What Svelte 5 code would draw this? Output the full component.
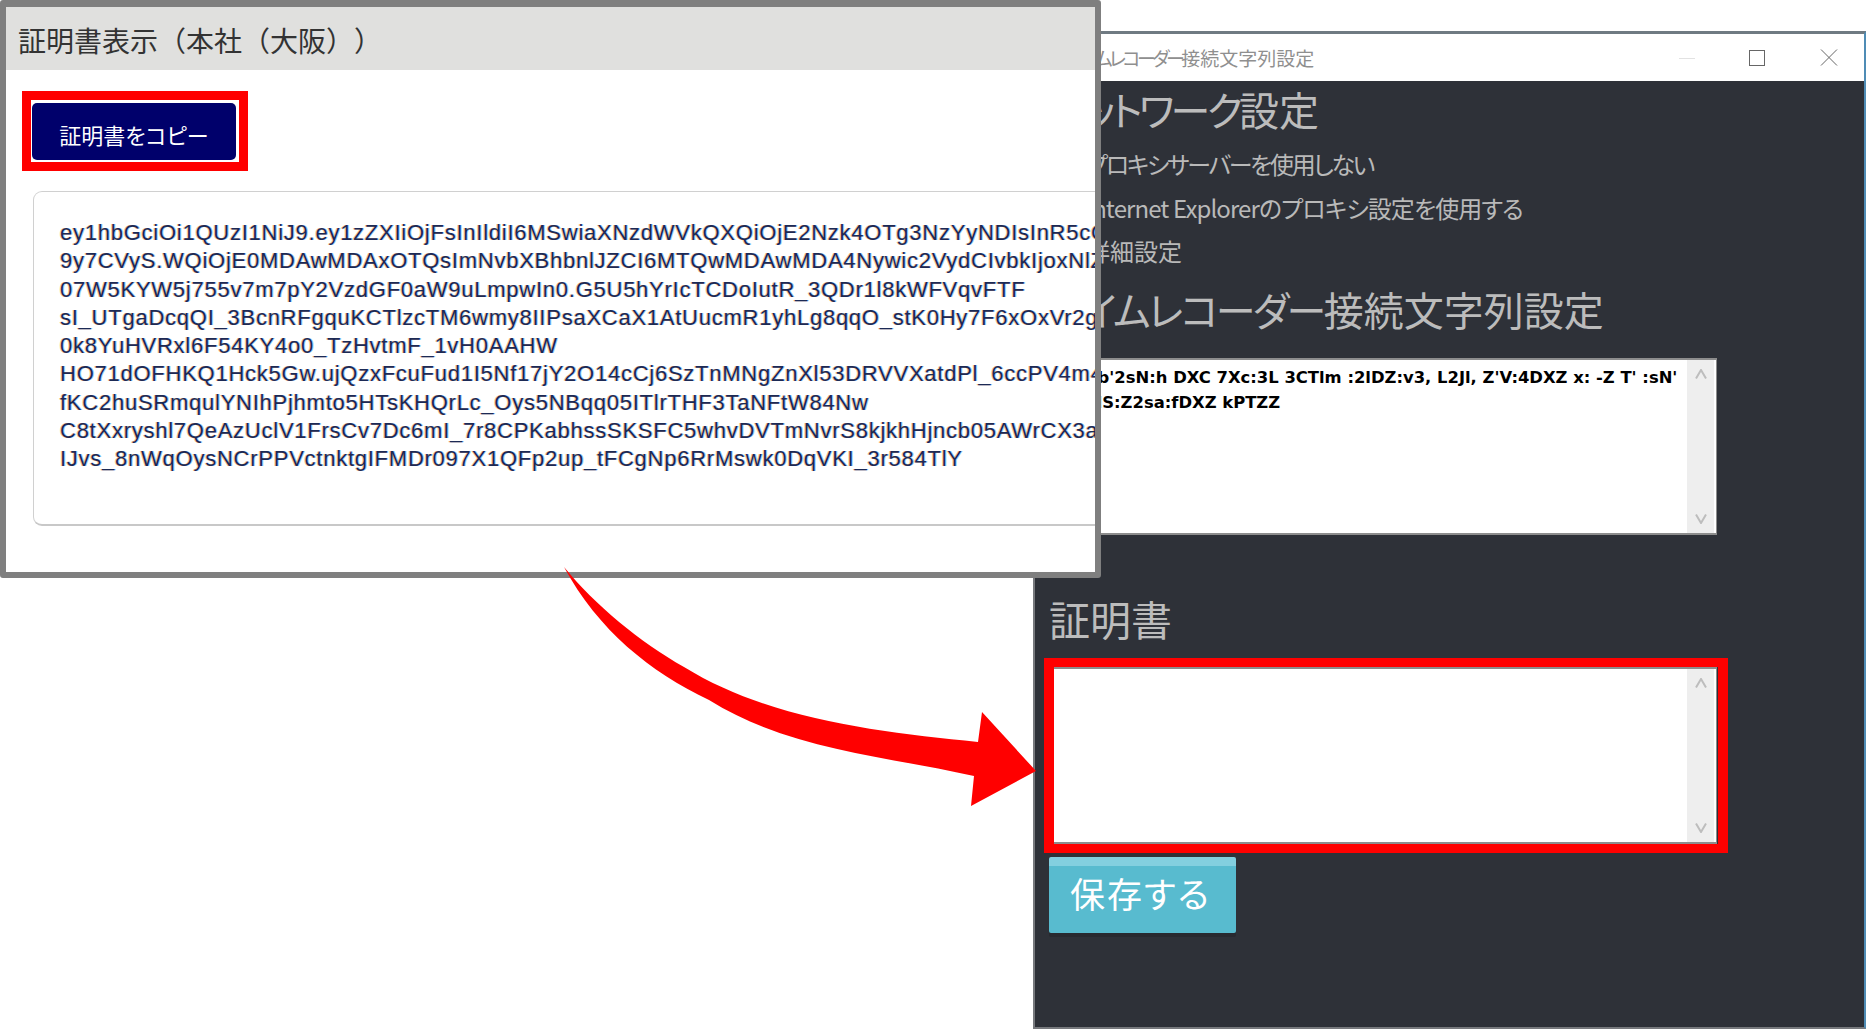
<script>
	const certLines = [
		'ey1hbGciOi1QUzI1NiJ9.ey1zZXIiOjFsInIldiI6MSwiaXNzdWVkQXQiOjE2Nzk4OTg3NzYyNDIsInR5cCI6MTI0',
		'9y7CVyS.WQiOjE0MDAwMDAxOTQsImNvbXBhbnlJZCI6MTQwMDAwMDA4Nywic2VydCIvbkIjoxNlZ0a',
		'07W5KYW5j755v7m7pY2VzdGF0aW9uLmpwIn0.G5U5hYrIcTCDoIutR_3QDr1l8kWFVqvFTF',
		'sI_UTgaDcqQI_3BcnRFgquKCTlzcTM6wmy8IIPsaXCaX1AtUucmR1yhLg8qqO_stK0Hy7F6xOxVr2gF4a',
		'0k8YuHVRxl6F54KY4o0_TzHvtmF_1vH0AAHW',
		'HO71dOFHKQ1Hck5Gw.ujQzxFcuFud1I5Nf17jY2O14cCj6SzTnMNgZnXl53DRVVXatdPl_6ccPV4m4t1m',
		'fKC2huSRmqulYNIhPjhmto5HTsKHQrLc_Oys5NBqq05ITlrTHF3TaNFtW84Nw',
		'C8tXxryshl7QeAzUclV1FrsCv7Dc6mI_7r8CPKabhssSKSFC5whvDVTmNvrS8kjkhHjncb05AWrCX3a',
		'IJvs_8nWqOysNCrPPVctnktgIFMDr097X1QFp2up_tFCgNp6RrMswk0DqVKI_3r584TlY'
	];

	const connLines = [
		"eyJhb'2sN:h DXC 7Xc:3L 3CTlm :2lDZ:v3, L2Jl, Z'V:4DXZ x: -Z T' :sN'",
		'abcdS:Z2sa:fDXZ kPTZZ'
	];

	const options = [
		{ text: 'プロキシサーバーを使用しない', spacing: -2.3 },
		{ text: 'Internet Explorerのプロキシ設定を使用する', spacing: -0.9 },
		{ text: '詳細設定', spacing: 0 }
	];
</script>

<div class="desktop">
	<section class="window">
		<header class="titlebar">
			<span class="win-title"><span class="kana-sm">タイムレコーダー</span>接続文字列設定</span>
			<div class="controls">
				<span class="ctl">
					<svg width="16" height="16" viewBox="0 0 16 16"><path d="M0 8.5h16" stroke="#e2e2e2" fill="none" /></svg>
				</span>
				<span class="ctl ctl-max">
					<svg width="16" height="16" viewBox="0 0 16 16"><rect x="0.5" y="0.5" width="15" height="15" stroke="#666" fill="none" /></svg>
				</span>
				<span class="ctl">
					<svg width="18" height="17" viewBox="0 0 18 17"><path d="M1 0.5l16 16M17 0.5l-16 16" stroke="#666" fill="none" /></svg>
				</span>
			</div>
		</header>

		<div class="content">
			<h2 class="net-title"><span class="kana-net">ネットワーク</span>設定</h2>
			{#each options as opt}
				<div class="option" style="letter-spacing: {opt.spacing}px">{opt.text}</div>
			{/each}

			<h2 class="conn-title"><span class="kana-conn">タイムレコーダー</span>接続文字列設定</h2>
			<div class="textbox">
				<div class="tb-text">
					{#each connLines as line}
						<div>{line}</div>
					{/each}
				</div>
				<div class="scroll">
					<svg width="12" height="10" viewBox="0 0 12 10"><path d="M1 9.5L6 1l5 8.5" stroke="#bdbdbd" stroke-width="2" fill="none" /></svg>
					<svg width="12" height="10" viewBox="0 0 12 10"><path d="M1 0.5L6 9l5-8.5" stroke="#bdbdbd" stroke-width="2" fill="none" /></svg>
				</div>
			</div>

			<h2 class="cert-title">証明書</h2>
			<div class="cert-field">
				<div class="textbox">
					<div class="tb-text"></div>
					<div class="scroll">
						<svg width="12" height="10" viewBox="0 0 12 10"><path d="M1 9.5L6 1l5 8.5" stroke="#bdbdbd" stroke-width="2" fill="none" /></svg>
						<svg width="12" height="10" viewBox="0 0 12 10"><path d="M1 0.5L6 9l5-8.5" stroke="#bdbdbd" stroke-width="2" fill="none" /></svg>
					</div>
				</div>
				<div class="field-mark"></div>
			</div>

			<button class="save" type="button">保存する</button>
		</div>
	</section>

	<section class="panel">
		<header class="panel-head">証明書表示（本社（大阪））</header>
		<div class="panel-body">
			<div class="copy-mark">
				<button class="copy" type="button">証明書をコピー</button>
			</div>
			<div class="cert-card">
				{#each certLines as line}
					<div class="cert-line">{line}</div>
				{/each}
			</div>
		</div>
	</section>

	<svg class="arrow" width="1868" height="1029" viewBox="0 0 1868 1029">
		<path
			fill="#ff0000"
			d="M564 567C595 605 640 642 684 667C770 720 880 732 978 742L982 712L1036 771L971 806L974 776C880 755 790 750 709 700C650 672 598 630 564 567Z"
		/>
	</svg>
</div>

<style>
	:global(body) {
		margin: 0;
		background: #fff;
	}

	.desktop {
		position: relative;
		width: 1868px;
		height: 1029px;
		overflow: hidden;
		background: #fff;
		font-family: 'Noto Sans CJK JP', 'Liberation Sans', sans-serif;
		font-feature-settings: 'palt';
	}

	/* right window, sits behind the panel */
	.window {
		position: absolute;
		left: 1033px;
		top: 31px;
		width: 833px;
		height: 998px;
		box-sizing: border-box;
		border-top: 3px solid #6f7a82;
		border-left: 2px solid #77797d;
		border-right: 2px solid #4f8cb5;
		border-bottom: 2px solid #77797d;
		background: #2e3138;
		display: flex;
		flex-direction: column;
	}

	.titlebar {
		height: 47px;
		flex: none;
		background: #fff;
		display: flex;
		align-items: center;
		justify-content: space-between;
		padding-left: 34px;
	}

	.win-title {
		font-size: 19px;
		line-height: 44px;
		color: #8f8f8f;
		white-space: nowrap;
	}

	.kana-sm {
		letter-spacing: -3.5px;
	}

	.controls {
		display: flex;
	}

	.ctl {
		width: 71px;
		height: 47px;
		box-sizing: border-box;
		display: flex;
		align-items: center;
		justify-content: center;
	}

	.ctl-max {
		padding-right: 2px;
	}

	.content {
		padding-left: 14px;
		color: #bdbdbd;
	}

	h2 {
		margin: 0;
		font-weight: 400;
		font-size: 40px;
		line-height: 44px;
		white-space: nowrap;
		color: #bcbcbc;
	}

	.kana-net {
		letter-spacing: -3.6px;
	}

	.kana-conn {
		letter-spacing: -2.6px;
	}

	.net-title {
		margin-top: 6px;
		margin-bottom: 12px;
	}

	.option {
		height: 43.5px;
		line-height: 41px;
		padding-left: 37px;
		font-size: 24px;
		white-space: nowrap;
		color: #b9b9b9;
	}

	.conn-title {
		margin-top: 13px;
		margin-bottom: 27px;
	}

	.cert-title {
		margin-top: 61px;
		margin-bottom: 27px;
		font-size: 41px;
	}

	.textbox {
		width: 668px;
		height: 177px;
		box-sizing: border-box;
		border: 1px solid #8d8d8d;
		border-top-width: 2px;
		border-bottom-width: 2px;
		background: #fff;
		display: flex;
		justify-content: space-between;
		padding: 0 2px 0 0;
	}

	.tb-text {
		flex: 1;
		min-width: 0;
		overflow: hidden;
		padding: 5px 0 0 8px;
		font-family: 'DejaVu Sans', sans-serif;
		font-weight: 700;
		font-size: 16.4px;
		line-height: 25px;
		color: #000;
		white-space: nowrap;
	}

	.scroll {
		width: 27px;
		flex: none;
		background: #eeeeee;
		display: flex;
		flex-direction: column;
		align-items: center;
		justify-content: space-between;
		padding: 9px 0;
		box-sizing: border-box;
	}

	.cert-field {
		position: relative;
		width: 668px;
	}

	.field-mark {
		position: absolute;
		left: -5px;
		right: -11px;
		top: -9px;
		bottom: -9px;
		border: 9px solid #ff0000;
		border-left-width: 10px;
		border-right-width: 10px;
		pointer-events: none;
	}

	.save {
		display: block;
		margin-top: 13px;
		width: 187px;
		height: 76px;
		padding: 0 4px 14px 0;
		border: 0;
		border-top: 9px solid #83cfdf;
		border-radius: 2px;
		background: #58bbcf;
		box-shadow: 0 4px 0 #282a30;
		color: #fff;
		font-family: inherit;
		font-feature-settings: 'palt';
		font-size: 35px;
		letter-spacing: 2px;
	}

	/* left panel, lies over the window */
	.panel {
		position: absolute;
		left: 0;
		top: 0;
		width: 1101px;
		height: 578px;
		box-sizing: border-box;
		border: 6px solid #7f7f7f;
		border-top-width: 7px;
		border-radius: 3px;
		background: #fff;
		overflow: hidden;
	}

	.panel-head {
		height: 63px;
		line-height: 66px;
		background: #e0e0de;
		padding-left: 12px;
		font-size: 28px;
		color: #333;
		font-feature-settings: normal;
		text-spacing-trim: space-all;
		white-space: nowrap;
	}

	.panel-body {
		padding: 21px 0 0 16px;
	}

	.copy-mark {
		width: 226px;
		height: 80px;
		box-sizing: border-box;
		border: 9px solid #ff0000;
		padding: 3px 3px 2px 1px;
		background: #fff;
	}

	.copy {
		display: block;
		width: 100%;
		height: 100%;
		padding: 4px 0 0;
		border: 0;
		border-radius: 5px;
		background: #00006b;
		color: #fff;
		font-family: inherit;
		font-feature-settings: 'palt';
		font-size: 22px;
	}

	.cert-card {
		margin: 20px 0 0 11px;
		width: 1300px;
		height: 335px;
		box-sizing: border-box;
		border: 1px solid #d0d0d0;
		border-bottom: 2px solid #c8c8c8;
		border-radius: 9px;
		padding: 27px 0 0 26px;
	}

	.cert-line {
		height: 28.3px;
		line-height: 28.3px;
		font-family: 'Liberation Sans', sans-serif;
		font-size: 22px;
		letter-spacing: 0.75px;
		color: #1c2a55;
		white-space: nowrap;
		text-shadow:
			-1px 0 rgba(255, 165, 70, 0.6),
			1px 0 rgba(90, 175, 255, 0.6);
	}

	.arrow {
		position: absolute;
		left: 0;
		top: 0;
		pointer-events: none;
	}
</style>
